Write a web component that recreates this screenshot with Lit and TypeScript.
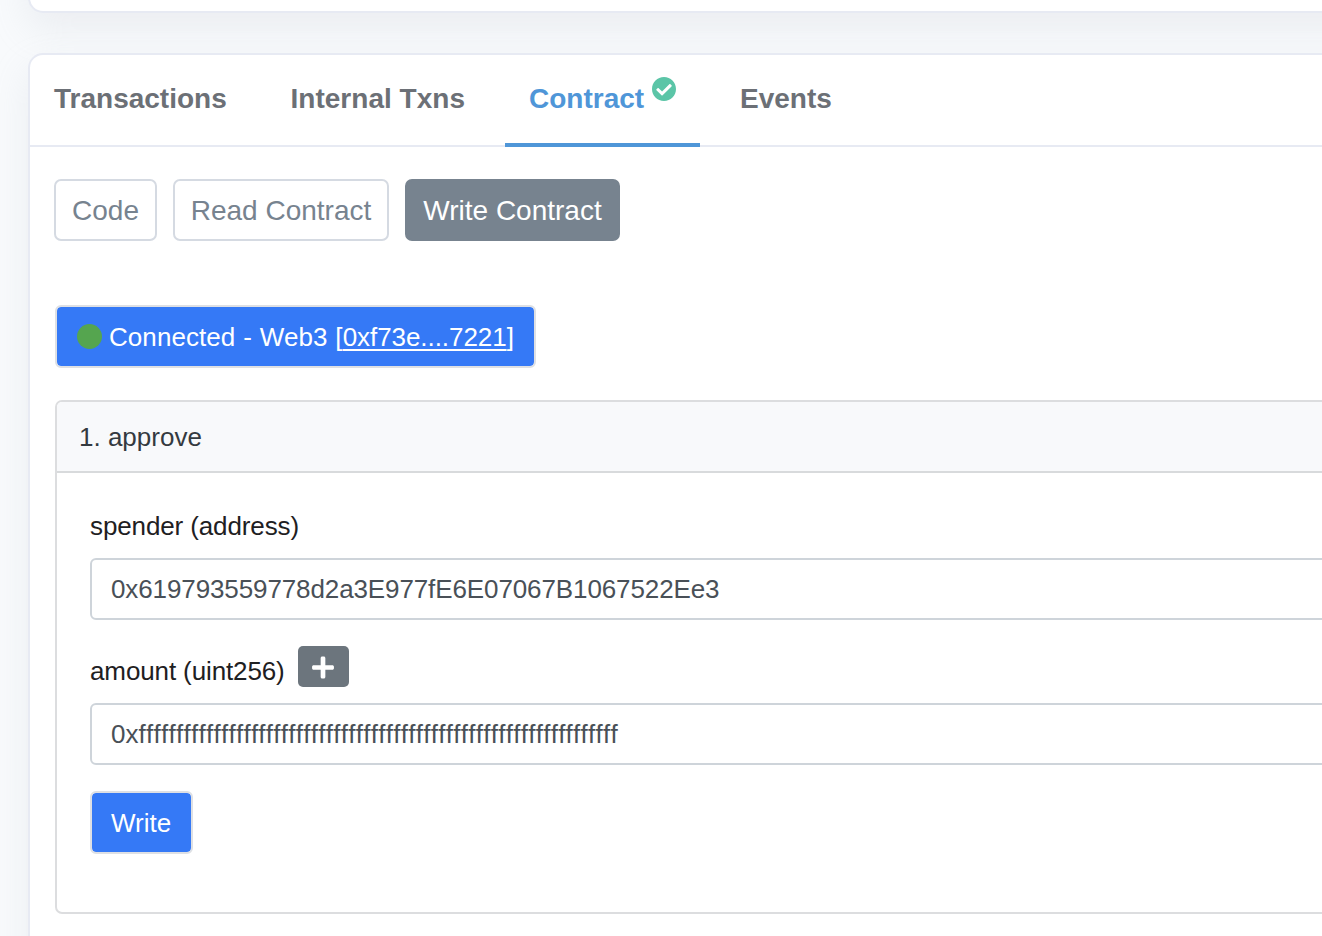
import { LitElement, html, css } from "lit";
import { customElement } from "lit/decorators.js";

@customElement("app-root")
export class AppRoot extends LitElement {
  static styles = css`
    :host {
      display: block;
      height: 936px;
      overflow: hidden;
      background: #f8fafc;
      font-family: "Liberation Sans", Arial, sans-serif;
      font-size: 26px;
      line-height: 40px;
      color: #1e2022;
      white-space: nowrap;
    }
    * {
      box-sizing: border-box;
    }
    svg {
      display: block;
      fill: currentColor;
    }
    .page {
      display: flex;
      flex-direction: column;
      gap: 40px;
      height: 1300px;
      width: 1400px;
      margin-top: -200px;
      padding-left: 28px;
    }
    .card {
      background: #fff;
      border: 2px solid #e7eaf3;
      border-radius: 15px;
      box-shadow: 0 16px 38px rgba(184, 188, 200, 0.2);
    }
    .summary {
      height: 213px;
      flex: none;
    }
    .contract {
      flex: 1;
    }
    .tabs {
      display: flex;
      gap: 16px;
      height: 92px;
      border-bottom: 2px solid #e7eaf3;
    }
    .tab {
      height: 92px;
      padding: 22px 0 0 24px;
      font-size: 28px;
      line-height: 43px;
      font-weight: 700;
      color: #6c7076;
    }
    .tab-transactions {
      width: 220px;
    }
    .tab-internal {
      width: 223px;
      padding-left: 24.5px;
      letter-spacing: 0.02px;
    }
    .tab-contract {
      display: flex;
      gap: 8px;
      width: 195px;
      color: #4f96d8;
      border-bottom: 4px solid #4f96d8;
    }
    .verified {
      color: #5bc5a7;
    }
    .content {
      padding: 32px 0 0 24px;
    }
    .pills {
      display: flex;
      gap: 16px;
    }
    .pill {
      height: 62px;
      border: 2px solid #d5dae2;
      border-radius: 7px;
      font-size: 28px;
      line-height: 59px;
      text-align: center;
      color: #77838f;
    }
    .pill-code {
      width: 103px;
    }
    .pill-read {
      width: 216px;
    }
    .pill-write {
      width: 215px;
      background: #77838f;
      border-color: #77838f;
      color: #fff;
    }
    .primary {
      display: flex;
      align-items: center;
      height: 63px;
      border: 2px solid #dee0e4;
      border-radius: 6px;
      background: #3579f6;
      background-clip: padding-box;
      color: #fff;
    }
    .connection {
      width: 481px;
      margin: 64px 0 0 1px;
      padding-left: 20px;
    }
    .dot {
      width: 25px;
      height: 25px;
      margin-right: 7px;
      border-radius: 50%;
      background: #55a54f;
    }
    .status {
      letter-spacing: 0.06px;
      word-spacing: 0.6px;
    }
    .address {
      letter-spacing: -0.06px;
      text-decoration: underline;
      text-decoration-thickness: 2px;
      text-underline-offset: 3px;
    }
    .panel {
      height: 514px;
      margin: 32px 0 0 1px;
      border: 2px solid #dcdddf;
      border-radius: 7px;
      overflow: hidden;
    }
    .panel-head {
      height: 71px;
      padding-left: 22px;
      line-height: 70px;
      background: #f8f9fb;
      border-bottom: 2px solid #d8dadc;
      color: #343a40;
    }
    .panel-body {
      padding: 33px 0 0 33px;
    }
    .label {
      display: flex;
      height: 40px;
      letter-spacing: -0.12px;
    }
    .label-amount {
      height: 57px;
      margin-top: 26px;
    }
    .label-amount .name {
      width: 208px;
      padding-top: 5px;
    }
    .add {
      display: flex;
      align-items: center;
      justify-content: center;
      width: 51px;
      height: 41px;
      padding: 1px 1px 0 0;
      border-radius: 5px;
      background: #6c757d;
      color: #fff;
    }
    .field {
      height: 62px;
      padding-left: 19px;
      border: 2px solid #ced4da;
      border-radius: 6px;
      line-height: 58px;
      color: #495057;
    }
    .field-spender {
      margin-top: 12px;
    }
    .hash {
      letter-spacing: -0.11px;
    }
    .max {
      letter-spacing: 0.74px;
    }
    .max .prefix {
      letter-spacing: 0;
    }
    .write {
      width: 103px;
      margin-top: 26px;
      padding-left: 19px;
    }
  `;

  render() {
    return html`
      <main class="page">
        <section class="card summary"></section>
        <section class="card contract">
          <nav class="tabs">
            <div class="tab tab-transactions">Transactions</div>
            <div class="tab tab-internal">Internal Txns</div>
            <div class="tab tab-contract">
              <span>Contract</span>
              <svg class="verified" width="24" height="24" viewBox="8 8 496 496">
                <path
                  d="M504 256c0 136.967-111.033 248-248 248S8 392.967 8 256 119.033 8 256 8s248 111.033 248 248zM227.314 387.314l184-184c6.248-6.248 6.248-16.379 0-22.627l-22.627-22.627c-6.248-6.249-16.379-6.249-22.628 0L216 308.118l-70.059-70.059c-6.248-6.248-16.379-6.248-22.628 0l-22.627 22.627c-6.248 6.248-6.248 16.379 0 22.627l104 104c6.249 6.249 16.379 6.249 22.628.001z"
                />
              </svg>
            </div>
            <div class="tab">Events</div>
          </nav>
          <div class="content">
            <div class="pills">
              <div class="pill pill-code">Code</div>
              <div class="pill pill-read">Read Contract</div>
              <div class="pill pill-write">Write Contract</div>
            </div>
            <div class="primary connection">
              <span class="dot"></span>
              <span class="status">Connected - Web3 [<span class="address">0xf73e....7221</span>]</span>
            </div>
            <section class="panel">
              <div class="panel-head">1. approve</div>
              <div class="panel-body">
                <div class="label">spender (address)</div>
                <div class="field field-spender hash">0x619793559778d2a3E977fE6E07067B1067522Ee3</div>
                <div class="label label-amount">
                  <span class="name">amount (uint256)</span>
                  <span class="add">
                    <svg width="22" height="25" viewBox="0 0 448 512">
                      <path
                        d="M416 208H272V64c0-17.67-14.33-32-32-32h-32c-17.67 0-32 14.33-32 32v144H32c-17.67 0-32 14.33-32 32v32c0 17.67 14.33 32 32 32h144v144c0 17.67 14.33 32 32 32h32c17.67 0 32-14.33 32-32V304h144c17.67 0 32-14.33 32-32v-32c0-17.67-14.33-32-32-32z"
                      />
                    </svg>
                  </span>
                </div>
                <div class="field max"><span class="prefix">0x</span>${"f".repeat(64)}</div>
                <div class="primary write">Write</div>
              </div>
            </section>
          </div>
        </section>
      </main>
    `;
  }
}
